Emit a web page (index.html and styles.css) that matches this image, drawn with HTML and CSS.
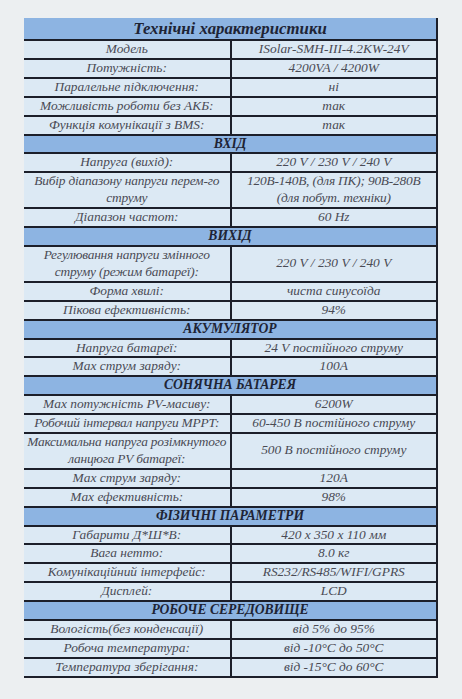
FILE: index.html
```html
<!DOCTYPE html>
<html lang="uk">
<head>
<meta charset="utf-8">
<title>Технічні характеристики</title>
<link rel="stylesheet" href="styles.css">
</head>
<body>
<div class="page">
<table class="spec">
  <tr class="title"><th colspan="2">Технічні характеристики</th></tr>
  <tr><td>Модель</td><td>ISolar-SMH-III-4.2KW-24V</td></tr>
  <tr><td>Потужність:</td><td>4200VA / 4200W</td></tr>
  <tr><td>Паралельне підключення:</td><td>ні</td></tr>
  <tr><td>Можливість роботи без АКБ:</td><td>так</td></tr>
  <tr><td>Функція комунікації з BMS:</td><td>так</td></tr>
  <tr class="section"><th colspan="2">ВХІД</th></tr>
  <tr><td>Напруга (вихід):</td><td>220 V / 230 V / 240 V</td></tr>
  <tr><td class="tight">Вибір діапазону напруги перем-го<br>струму</td><td class="tight">120В-140В, (для ПК); 90В-280В<br>(для побут. техніки)</td></tr>
  <tr><td>Діапазон частот:</td><td>60 Hz</td></tr>
  <tr class="section"><th colspan="2">ВИХІД</th></tr>
  <tr><td class="tight">Регулювання напруги змінного<br>струму (режим батареї):</td><td>220 V / 230 V / 240 V</td></tr>
  <tr><td>Форма хвилі:</td><td>чиста синусоїда</td></tr>
  <tr><td>Пікова ефективність:</td><td>94%</td></tr>
  <tr class="section"><th colspan="2">АКУМУЛЯТОР</th></tr>
  <tr><td>Напруга батареї:</td><td>24 V постійного струму</td></tr>
  <tr><td>Max струм заряду:</td><td>100A</td></tr>
  <tr class="section"><th colspan="2">СОНЯЧНА БАТАРЕЯ</th></tr>
  <tr><td>Max потужність PV-масиву:</td><td>6200W</td></tr>
  <tr><td class="tight">Робочий інтервал напруги MPPT:</td><td>60-450 В постійного струму</td></tr>
  <tr><td class="tight">Максимальна напруга розімкнутого<br>ланцюга PV батареї:</td><td>500 В постійного струму</td></tr>
  <tr><td>Max струм заряду:</td><td>120A</td></tr>
  <tr><td>Max ефективність:</td><td>98%</td></tr>
  <tr class="section"><th colspan="2">ФІЗИЧНІ ПАРАМЕТРИ</th></tr>
  <tr><td>Габарити Д*Ш*В:</td><td>420 x 350 x 110 мм</td></tr>
  <tr><td>Вага нетто:</td><td>8.0 кг</td></tr>
  <tr><td>Комунікаційний інтерфейс:</td><td>RS232/RS485/WIFI/GPRS</td></tr>
  <tr><td>Дисплей:</td><td>LCD</td></tr>
  <tr class="section"><th colspan="2">РОБОЧЕ СЕРЕДОВИЩЕ</th></tr>
  <tr><td>Вологість(без конденсації)</td><td>від 5% до 95%</td></tr>
  <tr><td>Робоча температура:</td><td>від -10°C до 50°C</td></tr>
  <tr><td>Температура зберігання:</td><td>від -15°C до 60°C</td></tr>
</table>
</div>
</body>
</html>
```
FILE: styles.css
```css
html, body {
  margin: 0;
  padding: 0;
  background: #eceff1;
}
.page {
  padding: 18px 0 0 24px;
}
.spec {
  border-collapse: collapse;
  width: 414px;
  table-layout: fixed;
  font-family: "Liberation Serif", "DejaVu Serif Condensed", "DejaVu Serif", serif;
  font-style: italic;
  color: #4a4b54;
  border-right: 2px solid #1c1f2a;
}
.spec td, .spec th {
  padding: 0 1px;
  text-align: center;
  border-bottom: 2px solid #1c1f2a;
}
.spec td {
  background: #dce9f4;
  font-size: 13.4px;
  line-height: 16.9px;
}
.spec td:first-child {
  width: 217px;
  border-right: 2px solid #1c1f2a;
}
.spec td.tight {
  white-space: nowrap;
  overflow: hidden;
  letter-spacing: -0.2px;
}
.spec th {
  background: #8db4e2;
  color: #1e2435;
  font-weight: bold;
  font-size: 13.6px;
  line-height: 16.9px;
}
.spec .title th {
  font-size: 16.8px;
  line-height: 21px;
}
```
